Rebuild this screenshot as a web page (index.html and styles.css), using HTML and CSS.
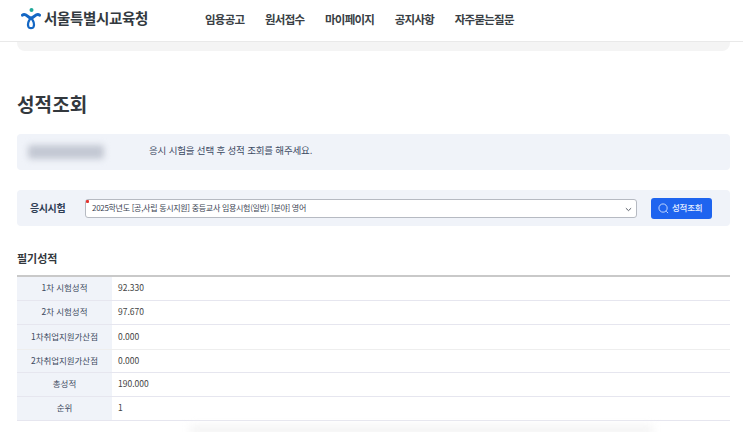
FILE: index.html
```html
<!DOCTYPE html>
<html lang="ko">
<head>
<meta charset="utf-8">
<title>성적조회</title>
<link rel="stylesheet" href="styles.css">
</head>
<body>
<header class="top">
  <div class="logo">
    <svg class="logo-mark" viewBox="0 0 20 22" width="20" height="22" aria-hidden="true">
      <circle cx="10.500" cy="2" r="2" fill="#1fa99a"/>
      <path d="M1.500 7.200c1.800-1.500 3.500-.3 5 1 1.500 1.300 2.700 1.800 3.500 1.800s2-.5 3.500-1.800c1.500-1.300 3.200-2.500 5-1" fill="none" stroke="#1467c4" stroke-width="3" stroke-linecap="round"/>
      <path d="M10 10c-2.600 2.800-3.400 6.500-2.600 8.800.7 1.900 4.500 1.900 5.200 0 .8-2.300 0-6-2.600-8.800z" fill="none" stroke="#1467c4" stroke-width="2.200"/>
    </svg>
    <span class="logo-text">서울특별시교육청</span>
  </div>
  <nav class="nav">
    <a>임용공고</a><a>원서접수</a><a>마이페이지</a><a>공지사항</a><a>자주묻는질문</a>
  </nav>
</header>
<div class="band"></div>
<main class="page">
  <h1 class="title">성적조회</h1>
  <section class="info">
    <div class="masked"></div>
    <p class="info-text">응시 시험을 선택 후 성적 조회를 해주세요.</p>
  </section>
  <section class="search">
    <label class="search-label">응시시험</label>
    <div class="select">
      <span class="req"></span>
      <span class="select-text">2025학년도 [공,사립 동시지원] 중등교사 임용시험(일반) [분야] 영어</span>
      <svg class="chev" viewBox="0 0 8 5" width="7" height="5" aria-hidden="true"><path d="M1 1l3 2.800L7 1" fill="none" stroke="#555c66" stroke-width="1.100"/></svg>
    </div>
    <button class="btn">
      <svg viewBox="0 0 12 12" width="11" height="11" aria-hidden="true"><circle cx="5.500" cy="5.500" r="4.500" fill="none" stroke="#cfe0ff" stroke-width="1"/><path d="M9 9l2 2" stroke="#cfe0ff" stroke-width="1"/></svg>
      <span>성적조회</span>
    </button>
  </section>
  <h2 class="sub">필기성적</h2>
  <div class="table">
    <div class="row"><div class="th">1차 시험성적</div><div class="td">92.330</div></div>
    <div class="row"><div class="th">2차 시험성적</div><div class="td">97.670</div></div>
    <div class="row row-tall"><div class="th">1차취업지원가산점</div><div class="td">0.000</div></div>
    <div class="row row-short"><div class="th">2차취업지원가산점</div><div class="td">0.000</div></div>
    <div class="row"><div class="th">총성적</div><div class="td">190.000</div></div>
    <div class="row"><div class="th">순위</div><div class="td">1</div></div>
  </div>
</main>
<div class="foot-shadow"></div>
</body>
</html>
```
FILE: styles.css
```css
* { box-sizing: border-box; }
html, body { margin: 0; padding: 0; height: 432px; overflow: hidden; background: #fff; }
body { font-family: "Noto Sans CJK KR", "Noto Sans", sans-serif; color: #333; position: relative; }

.top { height: 42px; display: flex; align-items: flex-start; padding-left: 21px; border-bottom: 1px solid #e9e9e9; }
.logo { display: flex; align-items: center; gap: 3px; height: 38px; width: 184px; }
.logo-mark { flex: none; }
.logo-text { font-size: 14.500px; font-weight: 700; color: #333a40; letter-spacing: -.35px; position: relative; top: -2px; }
.nav { display: flex; gap: 20.500px; height: 38px; align-items: center; }
.nav a { font-size: 11.500px; font-weight: 700; color: #3a3f45; letter-spacing: -.72px; }

.band { height: 9px; margin: 0 13px 0 17px; background: #f4f4f4; border-radius: 0 0 8px 8px; }

.page { padding: 0 13px 0 17px; }
.title { margin: 39px 0 0; height: 27px; font-size: 19px; line-height: 27px; font-weight: 700; color: #33383d; letter-spacing: .1px; }

.info { margin-top: 17px; height: 36px; background: #f0f3f9; border-radius: 4px; display: flex; align-items: center; }
.masked { width: 76px; height: 14px; margin-left: 11px; background: #c3c8d3; border-radius: 3px; filter: blur(3px); }
.info-text { margin: 0 0 0 45px; font-size: 9.500px; color: #3c4a63; letter-spacing: -.17px; position: relative; top: -2px; }

.search { margin-top: 20px; height: 36px; background: #f0f3f9; border-radius: 4px; display: flex; align-items: center; padding-left: 13px; }
.search-label { width: 55px; font-size: 10px; font-weight: 700; color: #2f3d55; letter-spacing: -.4px; position: relative; top: -1px; }
.select { position: relative; width: 552px; height: 19px; background: #fff; border: 1px solid #b6bac2; border-radius: 3px; display: flex; align-items: center; padding-left: 6px; }
.req { position: absolute; left: 0; top: 0; width: 3px; height: 3px; background: #e3342f; border-radius: 1px; }
.select-text { font-size: 8px; color: #3b4352; letter-spacing: -.3px; position: relative; top: -1px; }
.chev { position: absolute; right: 4px; top: 7px; }
.btn { margin-left: 14px; width: 61px; height: 21px; border: 0; padding: 0 0 0 7px; border-radius: 3px; background: #1e64ef; color: #e8f0ff; display: flex; align-items: center; gap: 3px; font: 8.500px "Noto Sans CJK KR", sans-serif; font-weight: 500; letter-spacing: -.2px; }
.btn span { position: relative; top: -1px; }

.sub { margin: 24px 0 0; height: 17px; font-size: 11px; line-height: 16px; font-weight: 700; color: #33383d; }
.table { margin-top: 8px; border-top: 2px solid #c9c9c9; }
.row { display: flex; height: 24px; border-bottom: 1px solid #e6e6ef; }
.row-tall { height: 25px; border-bottom-color: #eeeeee; }
.row-short { height: 23px; }
.th { width: 95px; background: #f0f3f9; font-size: 8.500px; color: #3d4a60; display: flex; align-items: center; justify-content: center; padding-bottom: 3px; letter-spacing: -.05px; }
.td { padding: 0 0 3px 6px; font-size: 8.500px; color: #444; display: flex; align-items: center; }

.foot-shadow { position: absolute; left: 190px; right: 90px; top: 426px; height: 8px; background: #f2f2f2; filter: blur(4px); }
```
